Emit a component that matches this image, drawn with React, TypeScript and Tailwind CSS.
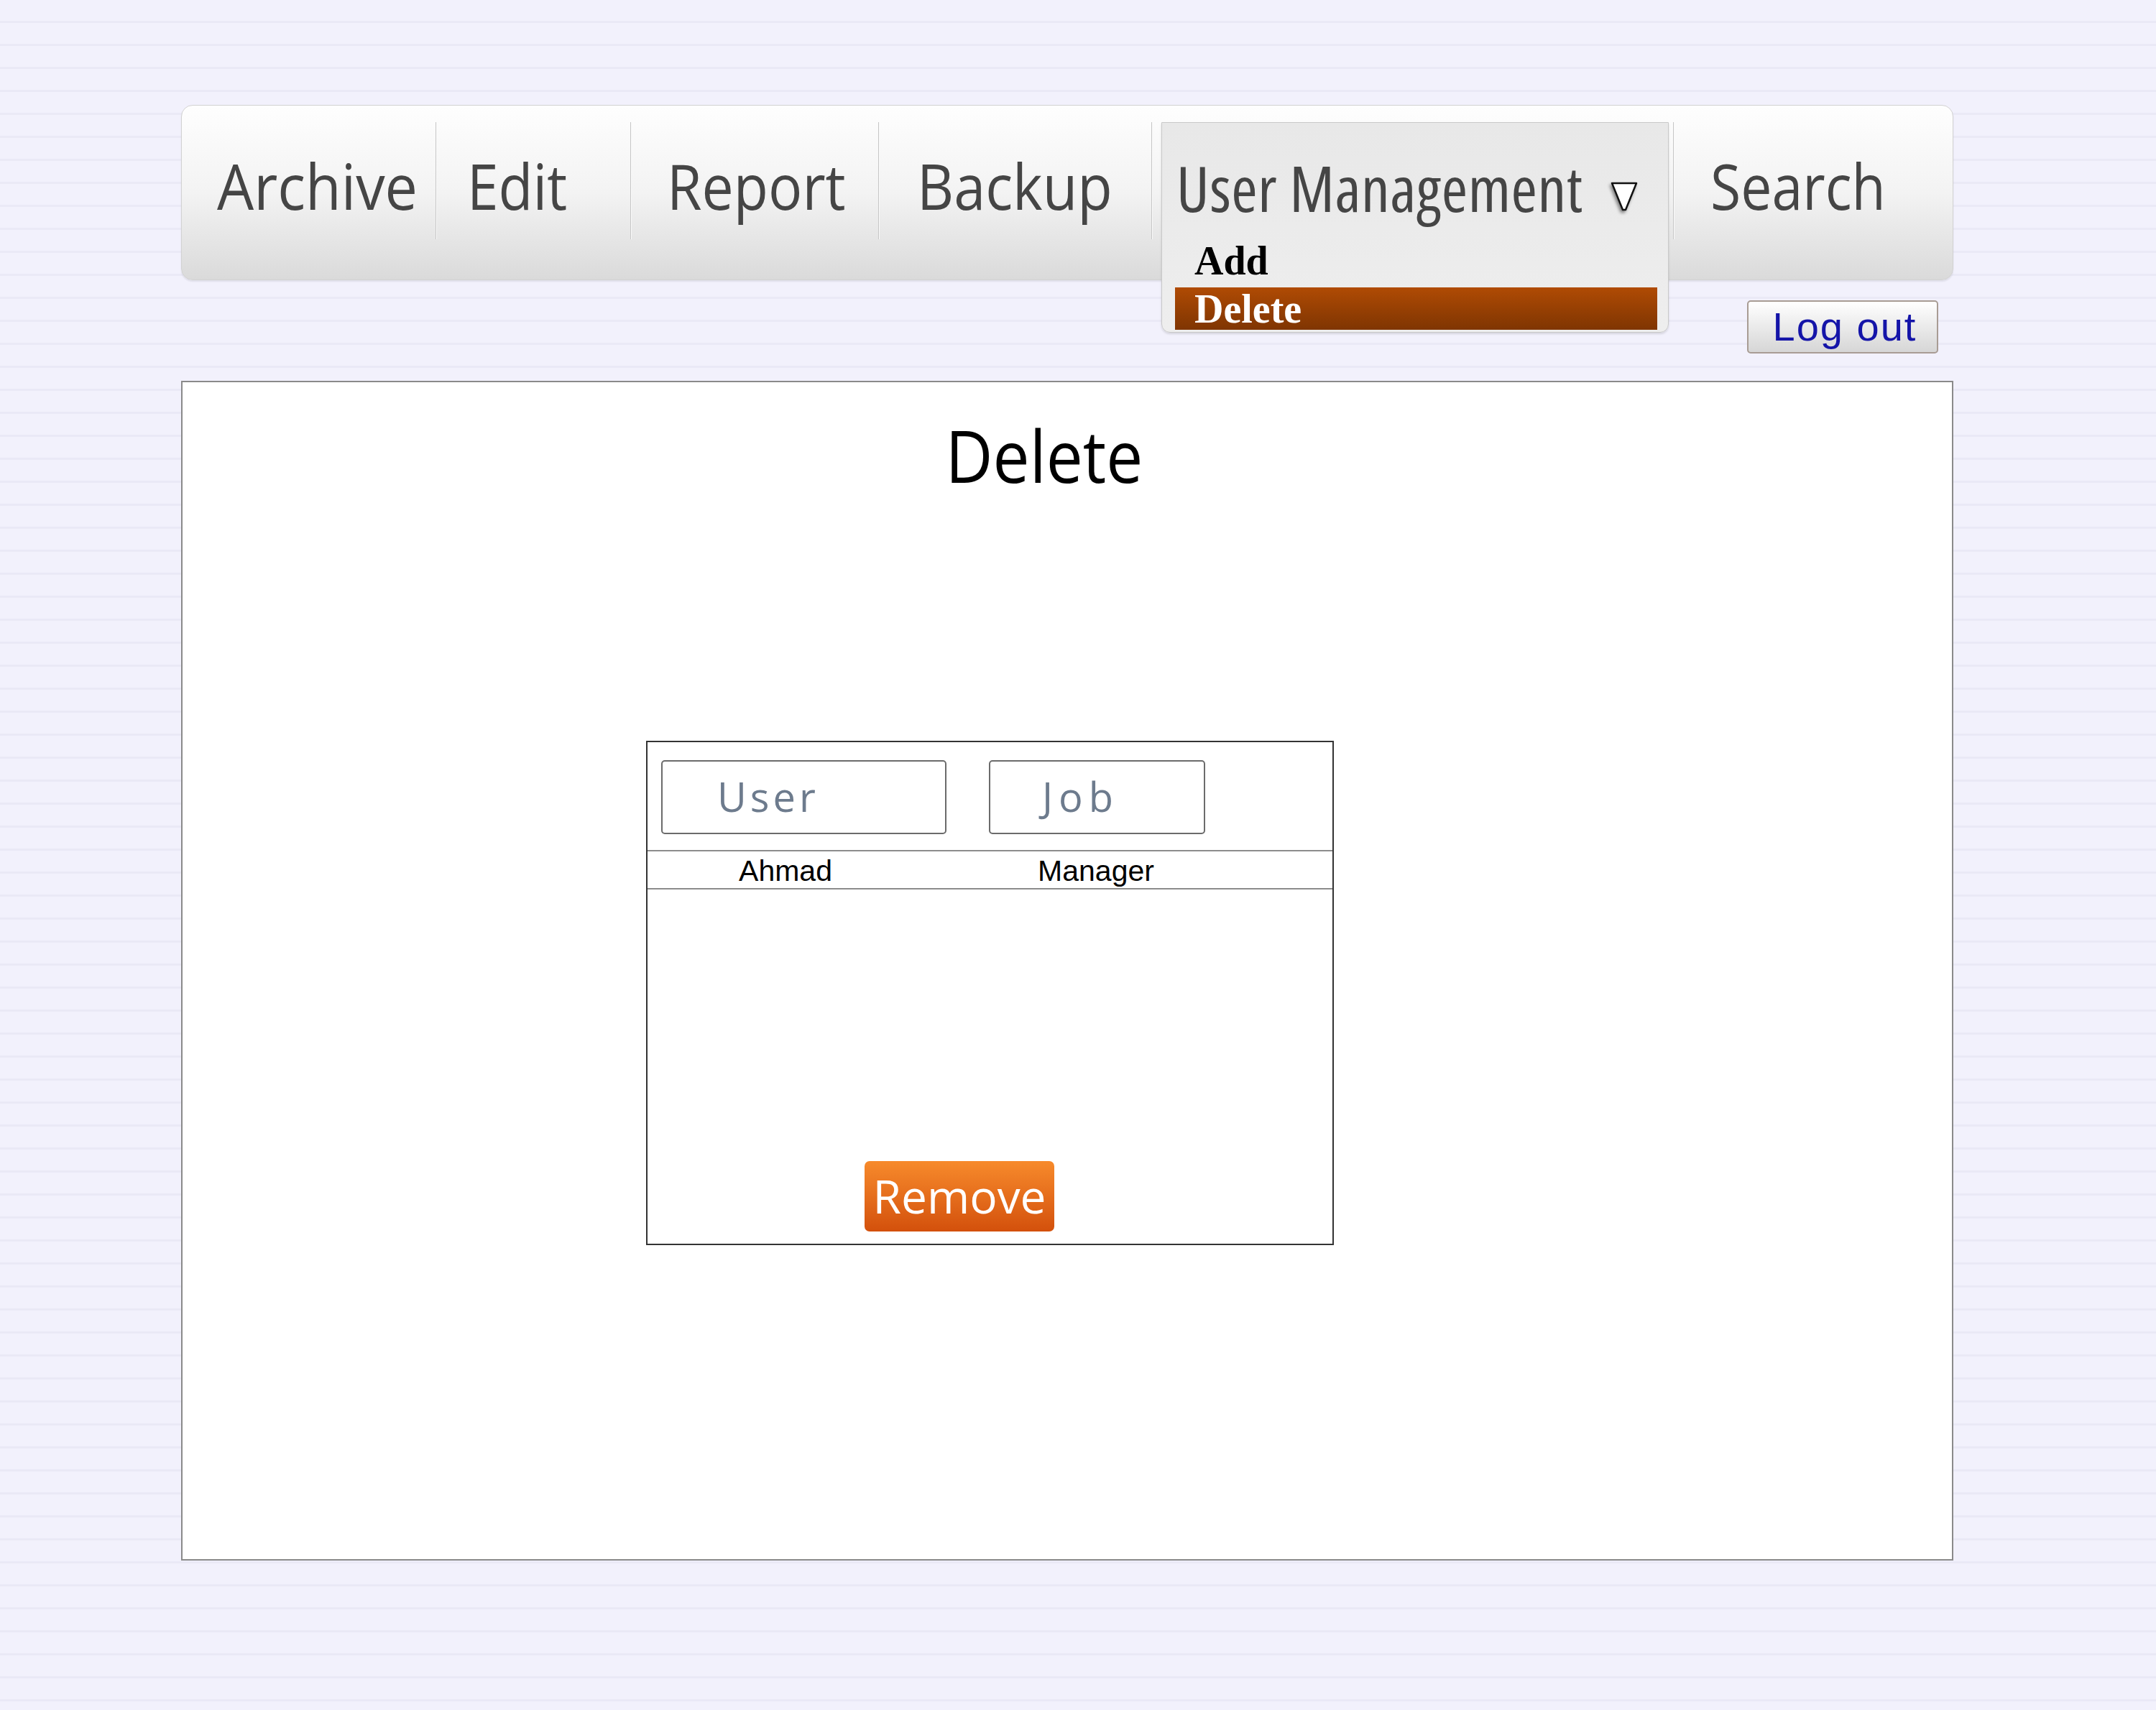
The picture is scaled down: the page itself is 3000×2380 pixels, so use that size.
import React from "react";

const sans = "font-['Open_Sans','Noto_Sans',sans-serif]";

const NavItem = ({ label, width, pl, scale }: { label: string; width: string; pl: string; scale: string }) => (
  <div className={`${width} ${pl} shrink-0 pt-[67px]`}>
    <span className={`${sans} ${scale} inline-block origin-left whitespace-nowrap text-[88px] leading-[88px] text-[#454545]`}>{label}</span>
  </div>
);

const Divider = () => <div className="mt-[23px] h-[163px] w-[2px] shrink-0 border-l border-[#c6c6c6] bg-[#fafafa]" />;

const Triangle = () => (
  <svg width="44" height="46" viewBox="0 0 44 46" className="drop-shadow-[-2px_3px_2px_rgba(0,0,0,0.45)]">
    <polygon points="3,3 37,3 22,40 18,40" fill="#ffffff" stroke="#111111" strokeWidth="2.5" strokeLinejoin="round" />
  </svg>
);

export default function App() {
  return (
    <div className="w-[3000px] h-[2380px] bg-[#f1f0fb] bg-[repeating-linear-gradient(180deg,#f2f1fc_0px,#f2f1fc_29px,#eae9f6_29px,#eae9f6_32px)] pl-[252px] pt-[146px]">
      <div className="w-[2466px]">
        {/* menu bar */}
        <nav className="flex h-[244px] rounded-[16px] border border-[#d2d2d2] bg-gradient-to-b from-[#fefefe] via-[#f3f3f3] to-[#dadada] shadow-[0_2px_2px_rgba(0,0,0,0.08)]">
          <NavItem label="Archive" width="w-[353px]" pl="pl-[49px]" scale="scale-x-[0.92]" />
          <Divider />
          <NavItem label="Edit" width="w-[269px]" pl="pl-[42px]" scale="scale-x-[0.89]" />
          <Divider />
          <NavItem label="Report" width="w-[343px]" pl="pl-[49px]" scale="scale-x-[0.895]" />
          <Divider />
          <NavItem label="Backup" width="w-[378px]" pl="pl-[52px]" scale="scale-x-[0.9]" />
          <Divider />
          <div className="relative w-[724px] shrink-0">
            <div className="absolute left-[12px] top-[23px] z-10 h-[293px] w-[706px] rounded-b-[12px] border border-[#c9c9c9] bg-gradient-to-b from-[#e8e8e8] to-[#eeeeee] shadow-[0_2px_3px_rgba(0,0,0,0.12)]">
              <div className="flex items-start pl-[20px] pt-[46px]">
                <span className={`${sans} font-stretch-[82%] w-[603px] whitespace-nowrap text-[88px] leading-[88px] tracking-[0.6px] text-[#454545]`}>User Management</span>
                <div className="mt-[35px]">
                  <Triangle />
                </div>
              </div>
              <div className="pl-[45px] pt-[30px] font-['Liberation_Serif',serif] text-[56px] font-bold leading-[56px] text-black">Add</div>
              <div className="ml-[18px] mt-[9px] h-[59px] w-[671px] bg-gradient-to-b from-[#b04b04] to-[#7f3502] pl-[27px] pt-[2px] font-['Liberation_Serif',serif] text-[56px] font-bold leading-[56px] text-white">
                Delete
              </div>
            </div>
          </div>
          <Divider />
          <NavItem label="Search" width="flex-1" pl="pl-[50px]" scale="scale-x-[0.875]" />
        </nav>

        {/* log out */}
        <div className="mt-[28px] flex justify-end pr-[21px]">
          <button className="flex h-[74px] w-[266px] items-center justify-center rounded-[5px] border-2 border-[#a89c94] bg-gradient-to-b from-[#ffffff] to-[#d6d6d6] pl-[6px] font-['Liberation_Sans',Arial,sans-serif] text-[56px] leading-none tracking-[2px] text-[#1414a8]">
            Log out
          </button>
        </div>

        {/* content */}
        <div className="mt-[38px] h-[1642px] w-[2466px] border-2 border-[#8a8a8a] bg-white">
          <div className="flex justify-center pr-[64px] pt-[51px]">
            <h1 className={`${sans} inline-block origin-center scale-x-[0.91] text-[100px] leading-[100px] text-black`}>Delete</h1>
          </div>

          <div className="ml-[645px] mt-[348px] flex h-[702px] w-[957px] flex-col border-2 border-[#333333]">
            <div className="flex gap-[59px] pl-[19px] pt-[25px]">
              <div className="h-[103px] w-[397px] rounded-[5px] border-2 border-[#6b6b6b] pl-[76px] pt-[20px]">
                <span className={`${sans} text-[56px] leading-[56px] tracking-[5px] text-[#6d7b8d]`}>User</span>
              </div>
              <div className="h-[103px] w-[301px] rounded-[5px] border-2 border-[#6b6b6b] pl-[72px] pt-[20px]">
                <span className={`${sans} text-[56px] leading-[56px] tracking-[8px] text-[#6d7b8d]`}>Job</span>
              </div>
            </div>

            <div className="mt-[22px] flex h-[55px] border-y-2 border-[#8c8c8c] pt-[7px] font-['Liberation_Sans',Arial,sans-serif] text-[41px] leading-[40px] text-black">
              <div className="w-[384px] text-center">Ahmad</div>
              <div className="w-[480px] text-center">Manager</div>
            </div>

            <div className="flex-1" />

            <div className="mb-[17px] ml-[302px]">
              <button className={`${sans} flex h-[98px] w-[264px] items-center justify-center rounded-[7px] bg-gradient-to-b from-[#f78a2b] to-[#d3500b] text-[64px] leading-none text-white`}>
                Remove
              </button>
            </div>
          </div>
        </div>
      </div>
    </div>
  );
}
